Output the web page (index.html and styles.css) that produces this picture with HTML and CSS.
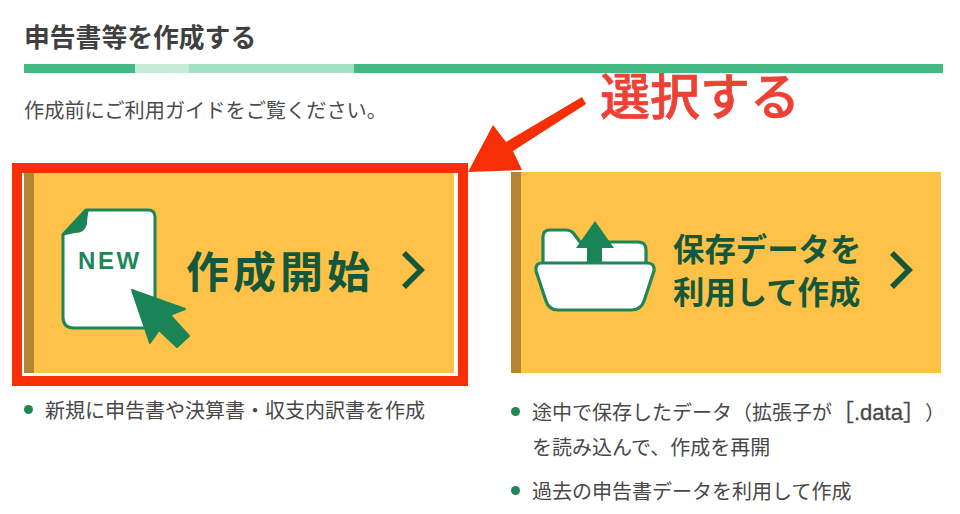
FILE: index.html
```html
<!DOCTYPE html>
<html lang="ja">
<head>
<meta charset="utf-8">
<title>申告書等を作成する</title>
<link rel="stylesheet" href="styles.css">
</head>
<body>
<main class="page">
  <h1 class="title">申告書等を作成する</h1>
  <div class="steps">
    <span class="step step-a"></span>
    <span class="step step-b"></span>
    <span class="step step-c"></span>
    <span class="step step-d"></span>
  </div>
  <p class="intro">作成前にご利用ガイドをご覧ください。</p>
  <div class="columns">
    <section class="column">
      <a class="card card-new">
        <svg class="icon icon-doc" viewBox="0 0 128 142" width="128" height="142">
          <path class="doc-body" d="M2 26.5 L25 2 H87 Q94 2 94 9 V113 Q94 120 87 120 H13 Q2 120 2 109 Z"/>
          <path class="solid" d="M1 26 L24 1 H28 Q26 10 26 16 Q24 25 14 25 Q8 26 1 28 Z"/>
          <text class="new-label" x="17" y="61">NEW</text>
          <path class="solid cursor" d="M71 82 L124 101 L109 107 L128 128 L116 139 L98 122 L89 135 Z"/>
        </svg>
        <span class="label label-big">作成開始</span>
        <svg class="chevron chevron-new" viewBox="0 0 24 38" width="24" height="38"><path d="M3 2 L20 19 L3 36"/></svg>
      </a>
      <ul class="notes notes-left">
        <li>新規に申告書や決算書・収支内訳書を作成</li>
      </ul>
    </section>
    <section class="column">
      <a class="card card-saved">
        <svg class="icon icon-folder" viewBox="0 0 122 92" width="122" height="92">
          <path class="folder-part" d="M9 44 V17 Q9 10 16 10 H32 Q37 10 40 14 L46 22 H104 Q112 22 112 30 V44 Z"/>
          <path class="solid" d="M61 1 L80 28 H68 V44 H53 V28 H42 Z"/>
          <path class="folder-part" d="M8 43 H113 Q121 43 120 51 L110 81 Q107 90 97 90 H24 Q15 90 12 81 L2 51 Q1 43 8 43 Z"/>
        </svg>
        <span class="label label-two">保存データを<br>利用して作成</span>
        <svg class="chevron chevron-saved" viewBox="0 0 24 38" width="24" height="38"><path d="M3 2 L20 19 L3 36"/></svg>
      </a>
      <ul class="notes notes-right">
        <li>途中で保存したデータ（拡張子が<b class="ext">［.data］</b>）<br>を読み込んで、作成を再開</li>
        <li>過去の申告書データを利用して作成</li>
      </ul>
    </section>
  </div>
  <div class="frame"></div>
  <svg class="arrow" viewBox="0 0 130 90" width="130" height="90">
    <path d="M8 82 L33 35 L46 52 L122 7 L126 14 L53 61 L62 80 Z"/>
  </svg>
  <div class="callout">選択する</div>
</main>
</body>
</html>
```
FILE: styles.css
```css
* { box-sizing: border-box; }
html, body { margin: 0; padding: 0; background: #fff; }
body {
  width: 960px;
  height: 514px;
  overflow: hidden;
  font-family: "Noto Sans CJK JP", "Noto Sans", sans-serif;
  color: #484848;
  text-spacing-trim: space-all;
}
.page { position: relative; height: 514px; padding: 18px 17px 0 24px; }
.title { margin: 0; font-size: 25.8px; line-height: 36px; font-weight: 700; color: #3f3f3f; }
.steps { position: relative; z-index: 2; display: flex; height: 9px; margin-top: 10px; }
.step { display: block; }
.step-a { width: 111px; background: #45b983; }
.step-b { width: 54px; background: #c6ecd9; }
.step-c { width: 165px; background: #9fe1c0; }
.step-d { flex: 1; background: #45b983; }
.intro { margin: 22px 0 0; font-size: 20.2px; line-height: 30px; color: #4d4d4d; }
.columns { display: grid; grid-template-columns: 430px 430px; column-gap: 57px; margin-top: 47px; }
.card {
  display: flex;
  align-items: center;
  height: 201px;
  background: #fdc247;
  border-left: 10px solid #b58533;
}
.card-new { padding-left: 27px; }
.card-saved { padding-left: 13px; }
.icon { flex: none; display: block; overflow: visible; }
.icon-doc { margin: 12px -3px 0 0; }
.icon-folder { margin: -14px 17px 0 0; }
.doc-body { fill: #fff; stroke: #1f8658; stroke-width: 3; stroke-linejoin: round; }
.folder-part { fill: #fff; stroke: #1f8658; stroke-width: 3.2; stroke-linejoin: round; }
.solid { fill: #1a8457; }
.cursor { stroke: #1a8457; stroke-width: 2; stroke-linejoin: round; }
.new-label { font-family: "Liberation Sans", sans-serif; font-size: 24px; font-weight: 700; letter-spacing: 2.6px; fill: #1f8658; }
.label { flex: none; font-weight: 700; color: #14573a; }
.label-big { font-size: 43px; line-height: 60px; letter-spacing: 4px; margin-top: -8px; }
.label-two { font-size: 31.4px; line-height: 43px; margin-top: -8px; }
.chevron { flex: none; display: block; fill: none; stroke: #14573a; stroke-width: 5.6; }
.chevron-new { margin: -6px 0 0 27px; }
.chevron-saved { margin: -6px 0 0 28px; }
.notes { list-style: none; margin: 0; padding: 0; font-size: 20px; line-height: 35px; color: #484848; white-space: nowrap; }
.notes-left { margin-top: 19px; }
.notes-right { margin-top: 21px; }
.notes li { position: relative; padding-left: 21px; }
.notes li + li { margin-top: 9px; }
.notes li::before {
  content: "";
  position: absolute;
  left: 0;
  top: 13px;
  width: 9px;
  height: 9px;
  border-radius: 50%;
  background: #1f8658;
}
.ext { font-family: "Liberation Sans", "Noto Sans CJK JP", sans-serif; font-weight: 400; font-size: 22px; line-height: 1; -webkit-text-stroke: 0.3px #484848; }
.frame {
  position: absolute;
  left: 12px;
  top: 163px;
  width: 456px;
  height: 223px;
  border: 10.5px solid #f62f06;
  pointer-events: none;
}
.arrow { position: absolute; left: 460px; top: 90px; }
.arrow path { fill: #f62f06; }
.callout {
  position: absolute;
  left: 600px;
  top: 58px;
  font-size: 50px;
  line-height: 70px;
  font-weight: 500;
  -webkit-text-stroke: 0.7px #ee4136;
  color: #ee4136;
  z-index: 1;
}
```
